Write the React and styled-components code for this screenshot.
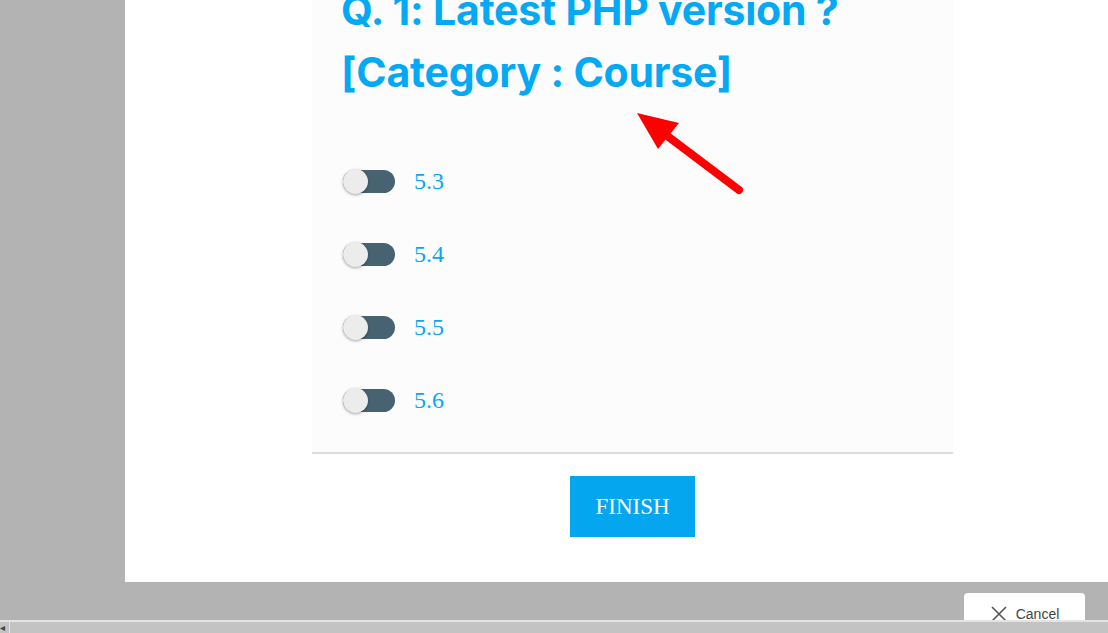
import React from "react";
import styled, { createGlobalStyle } from "styled-components";

const GlobalStyle = createGlobalStyle`
  html, body {
    margin: 0;
    padding: 0;
    background: #b3b3b3;
    overflow: hidden;
  }
`;

const options = ["5.3", "5.4", "5.5", "5.6"];

const App = () => {
  return (
    <Page>
      <GlobalStyle />
      <Frame>
        <Content>
          <Question>
            <Title>
              Q. 1: Latest PHP version ?<br />
              [Category : Course]
            </Title>
            <Options>
              {options.map((o) => (
                <Option key={o}>
                  <Switch>
                    <Knob />
                  </Switch>
                  <Label>{o}</Label>
                </Option>
              ))}
            </Options>
          </Question>
          <Divider />
          <Actions>
            <FinishButton>FINISH</FinishButton>
          </Actions>
        </Content>
        <Arrow width="120" height="100" viewBox="0 0 120 100">
          <line x1="38" y1="30" x2="111" y2="85" stroke="#ff0000" strokeWidth="8" strokeLinecap="round" />
          <polygon points="9,8 51,18 30,44" fill="#ff0000" />
        </Arrow>
      </Frame>
      <Footer>
        <CancelButton>
          <svg width="18" height="18" viewBox="0 0 18 18">
            <path d="M2 2 L16 16 M16 2 L2 16" stroke="#555" strokeWidth="1.6" fill="none" />
          </svg>
          Cancel
        </CancelButton>
      </Footer>
      <Scrollbar>
        <ScrollArrow>◂</ScrollArrow>
      </Scrollbar>
    </Page>
  );
};

export default App;

// STYLES

const Page = styled.div`
  width: 1108px;
  height: 633px;
  display: flex;
  flex-direction: column;
  background: #b3b3b3;
  overflow: hidden;
`;

const Frame = styled.div`
  position: relative;
  margin-left: 125px;
  height: 582px;
  flex-shrink: 0;
  background: #ffffff;
  overflow: hidden;
`;

const Content = styled.div`
  width: 641px;
  margin-left: 187px;
  height: 100%;
  display: flex;
  flex-direction: column;
`;

const Question = styled.div`
  background: #fcfcfc;
  padding: 0 0 15px 29px;
  margin-top: -21px;
`;

const Title = styled.h1`
  margin: 0;
  font-family: Inter, "Noto Sans", sans-serif;
  font-weight: 700;
  font-size: 41px;
  line-height: 62px;
  letter-spacing: -0.2px;
  color: #03a9f4;
  white-space: nowrap;
`;

const Options = styled.div`
  display: flex;
  flex-direction: column;
  margin-top: 42px;
`;

const Option = styled.div`
  height: 73px;
  display: flex;
  align-items: center;
  gap: 19px;
  padding-left: 2px;
`;

const Switch = styled.div`
  position: relative;
  width: 52px;
  height: 23px;
  border-radius: 12px;
  background: #476271;
`;

const Knob = styled.div`
  position: absolute;
  left: 0;
  top: -1px;
  width: 25px;
  height: 25px;
  border-radius: 50%;
  background: #ececec;
  box-shadow: 0 1px 3px rgba(0, 0, 0, 0.35);
`;

const Label = styled.span`
  font-family: "Liberation Serif", "Times New Roman", serif;
  font-size: 24px;
  color: #03a9f4;
`;

const Divider = styled.div`
  height: 2px;
  background: #dcdcdc;
`;

const Actions = styled.div`
  display: flex;
  justify-content: center;
  padding-top: 22px;
`;

const FinishButton = styled.button`
  width: 125px;
  height: 61px;
  border: none;
  background: #03a6ef;
  color: #ffffff;
  font-family: "Liberation Serif", "Times New Roman", serif;
  font-size: 23px;
  cursor: pointer;
`;

const Arrow = styled.svg`
  position: absolute;
  left: 503px;
  top: 105px;
`;

const Footer = styled.div`
  height: 39px;
  display: flex;
  justify-content: flex-end;
  align-items: flex-end;
  padding-right: 23px;
`;

const CancelButton = styled.button`
  width: 121px;
  height: 27px;
  display: flex;
  align-items: center;
  justify-content: center;
  gap: 8px;
  padding: 14px 0 0 0;
  border: none;
  border-radius: 4px 4px 0 0;
  background: #ffffff;
  color: #444;
  font-family: "Liberation Sans", Arial, sans-serif;
  font-size: 14px;
`;

const Scrollbar = styled.div`
  flex: 1;
  border-top: 2px solid #e4e4e4;
  background: #c3c3c3;
  display: flex;
  align-items: center;
`;

const ScrollArrow = styled.span`
  width: 9px;
  border-right: 1px solid #e4e4e4;
  font-size: 10px;
  color: #444;
  line-height: 11px;
`;
